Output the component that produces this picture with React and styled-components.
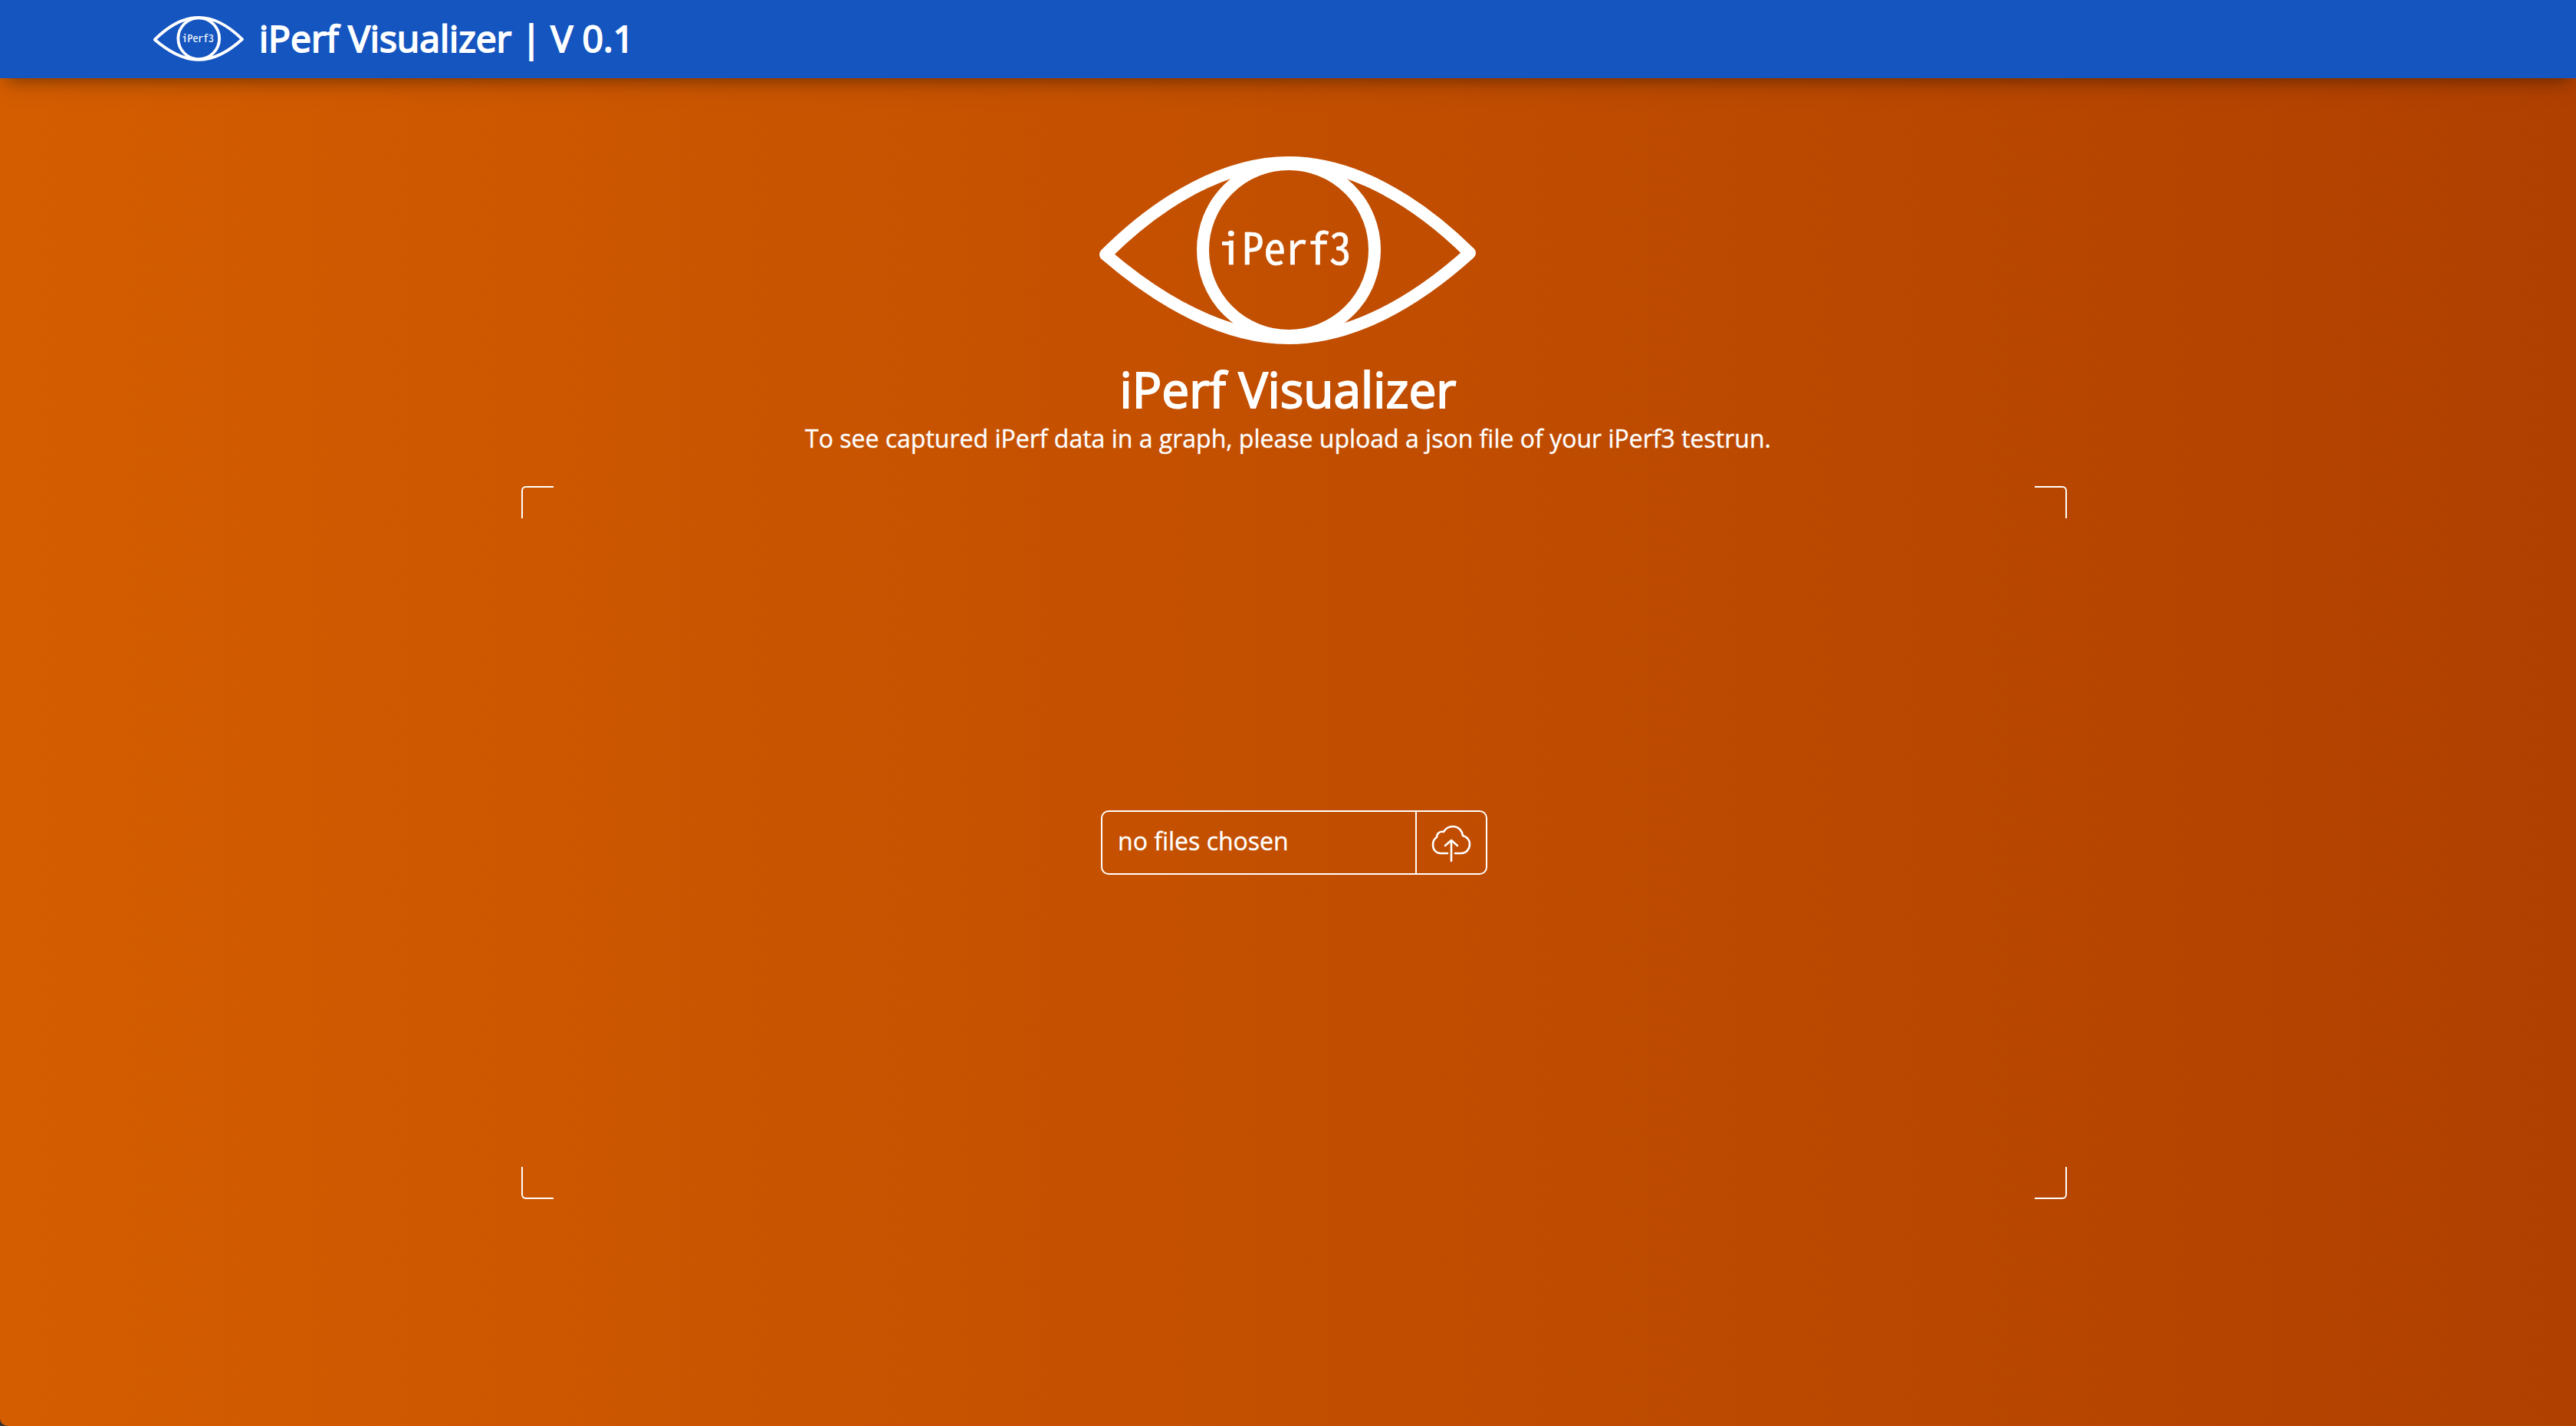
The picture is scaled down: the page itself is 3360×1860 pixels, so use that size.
import React, { useRef, useState } from "react";
import styled, { createGlobalStyle } from "styled-components";

const GlobalStyle = createGlobalStyle`
  *, *::before, *::after { box-sizing: border-box; }
  body {
    margin: 0;
    background: #3a3230;
    color: #fff;
    font-family: "Open Sans", "Noto Sans", sans-serif;
  }
  h1, p { margin: 0; }
`;

const Page = styled.div`
  display: flex;
  flex-direction: column;
  min-height: 100vh;
  background: linear-gradient(90deg, #d45d00, #b04000);
  border-bottom-left-radius: 10px;
`;

const Header = styled.header`
  display: flex;
  align-items: center;
  gap: 20px;
  height: 102px;
  padding: 0 200px 2px;
  background: #1555c0;
  box-shadow: 0 8px 40px 0 rgba(0, 0, 0, 0.08), 0 12px 20px -10px rgba(0, 0, 0, 0.4);
`;

const Brand = styled.span`
  font-size: 48px;
  line-height: 64px;
  -webkit-text-stroke: 2px #fff;
`;

const Main = styled.main`
  display: flex;
  flex: 1;
  flex-direction: column;
  align-items: center;
  padding-top: 102px;
`;

const Logo = styled.svg`
  display: block;
  width: ${(p) => p.$width}px;
  height: auto;
  fill: none;
  stroke: #fff;
  stroke-width: 16;
  stroke-linejoin: round;

  text {
    fill: #fff;
    stroke-width: 0.6;
    font-family: "Noto Sans Mono CJK SC", "Noto Sans CJK SC", monospace;
    font-size: 57px;
    text-anchor: middle;
  }

  .slab {
    stroke-width: 5;
  }
`;

const Title = styled.h1`
  margin-top: 14px;
  font-size: 64px;
  font-weight: 400;
  line-height: 88px;
  -webkit-text-stroke: 2px #fff;
`;

const Lead = styled.p`
  font-size: 32px;
  line-height: 40px;
  -webkit-text-stroke: 1px rgba(255, 255, 255, 0.4);
`;

const DropZone = styled.section`
  position: relative;
  display: flex;
  align-items: center;
  justify-content: center;
  width: 60%;
  height: 50vh;
  margin: 42px 0 0 16px;
`;

const Corner = styled.span`
  position: absolute;
  ${(p) => p.$y}: 0;
  ${(p) => p.$x}: 0;
  width: 42px;
  height: 42px;
  border: 0 solid #fff;
  border-${(p) => p.$y}-width: 2px;
  border-${(p) => p.$x}-width: 2px;
  border-${(p) => p.$y}-${(p) => p.$x}-radius: 6px;
`;

const Picker = styled.div`
  display: flex;
  width: 504px;
  height: 84px;
  border: 2px solid #fff;
  border-radius: 10px;
`;

const FileName = styled.label`
  flex: 1;
  padding: 0 20px;
  font-size: 32px;
  line-height: 76px;
  -webkit-text-stroke: 1px rgba(255, 255, 255, 0.4);
`;

const HiddenFile = styled.input`
  display: none;
`;

const UploadButton = styled.button`
  display: flex;
  align-items: center;
  justify-content: center;
  width: 92px;
  padding: 0;
  border: 0;
  border-left: 2px solid #fff;
  background: none;
  color: inherit;
  cursor: pointer;
`;

const CloudIcon = styled.svg`
  width: 52px;
  height: 52px;
  fill: none;
  stroke: currentColor;
  stroke-width: 2.6;
  stroke-linecap: round;
  stroke-linejoin: round;
`;

function EyeLogo({ width }) {
  return (
    <Logo $width={width} viewBox="0 0 492 246" role="img" aria-label="iPerf3">
      <path d="M8 128C80 56 165 8 247 8S412 56 483 126C412 190 330 237 247 237S80 190 8 128Z" />
      <circle cx="247" cy="122" r="112" />
      <path className="slab" d="M160 113.5H171" />
      <text x="243" y="141">iPerf3</text>
    </Logo>
  );
}

export default function App() {
  const input = useRef(null);
  const [name, setName] = useState("no files chosen");
  return (
    <>
      <GlobalStyle />
      <Page>
        <Header>
          <EyeLogo width={118} />
          <Brand>iPerf Visualizer | V 0.1</Brand>
        </Header>
        <Main>
          <EyeLogo width={492} />
          <Title>iPerf Visualizer</Title>
          <Lead>To see captured iPerf data in a graph, please upload a json file of your iPerf3 testrun.</Lead>
          <DropZone>
            <Corner $y="top" $x="left" />
            <Corner $y="top" $x="right" />
            <Corner $y="bottom" $x="left" />
            <Corner $y="bottom" $x="right" />
            <Picker>
              <FileName htmlFor="file">{name}</FileName>
              <HiddenFile
                ref={input}
                id="file"
                type="file"
                accept=".json"
                onChange={(e) => setName(e.target.files[0]?.name ?? "no files chosen")}
              />
              <UploadButton type="button" aria-label="Upload" onClick={() => input.current.click()}>
                <CloudIcon viewBox="0 0 52 52">
                  <path d="M21 40H12C6 40 2 35 2 29C2 24 4 21 7 19C7 14 11 11 16 12C19 7 23 5 28 5C35 5 40 10 41 17C47 19 50 23 50 28C50 35 45 40 39 40H31" />
                  <path d="M26 50V23M18 30L26 23L34 30" />
                </CloudIcon>
              </UploadButton>
            </Picker>
          </DropZone>
        </Main>
      </Page>
    </>
  );
}
